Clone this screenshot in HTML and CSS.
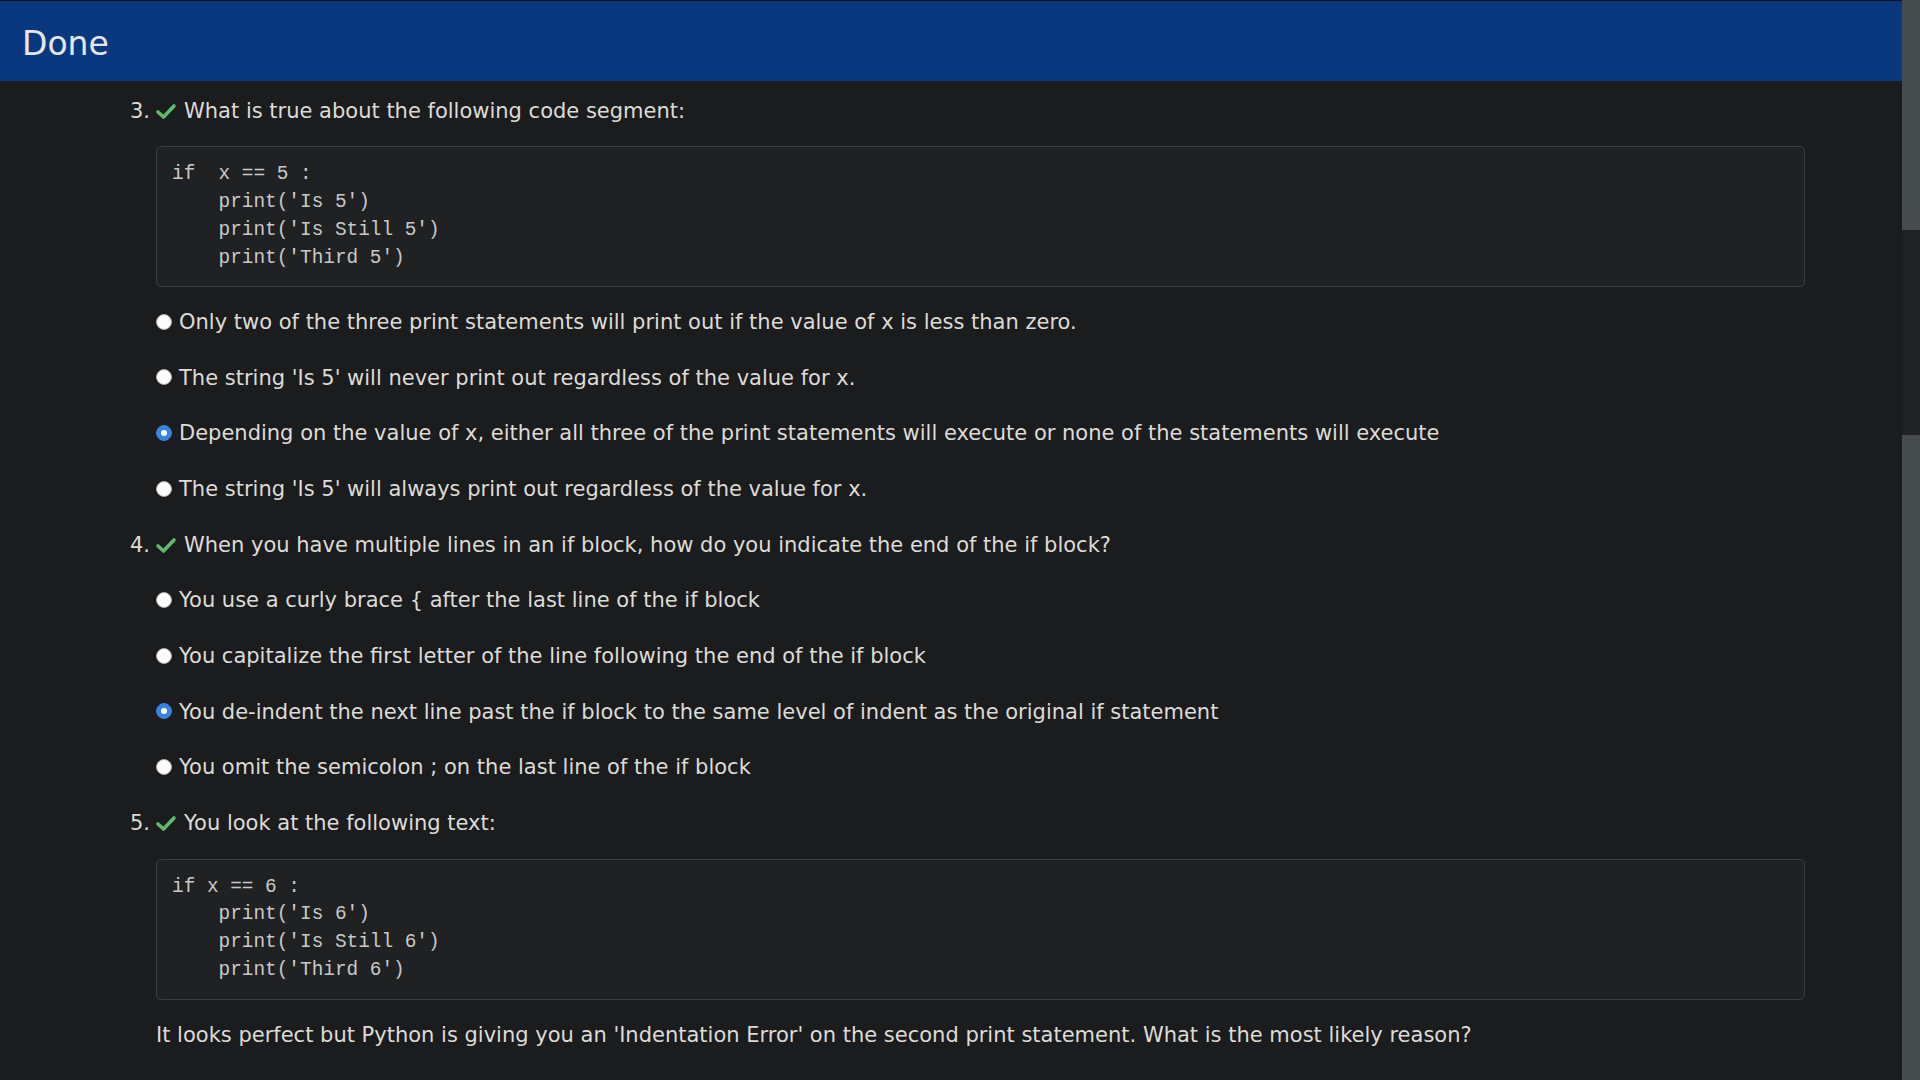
FILE: index.html
```html
<!DOCTYPE html>
<html lang="en">
<head>
<meta charset="utf-8">
<title>Done</title>
<link rel="stylesheet" href="styles.css">
</head>
<body>
<div class="page">
  <main class="main">
    <header class="header"><h1 class="title">Done</h1></header>
    <div class="content">
      <section class="question">
        <div class="q-title"><span class="num">3.</span><svg class="check" viewBox="0 0 22 17" width="22" height="17"><polyline points="3,9 8.5,14 19,3" /></svg><span>What is true about the following code segment:</span></div>
        <pre class="code">if  x == 5 :
    print('Is 5')
    print('Is Still 5')
    print('Third 5')</pre>
        <div class="option"><span class="radio"></span><span>Only two of the three print statements will print out if the value of x is less than zero.</span></div>
        <div class="option"><span class="radio"></span><span>The string 'Is 5' will never print out regardless of the value for x.</span></div>
        <div class="option"><span class="radio checked"></span><span>Depending on the value of x, either all three of the print statements will execute or none of the statements will execute</span></div>
        <div class="option"><span class="radio"></span><span>The string 'Is 5' will always print out regardless of the value for x.</span></div>
      </section>
      <section class="question">
        <div class="q-title"><span class="num">4.</span><svg class="check" viewBox="0 0 22 17" width="22" height="17"><polyline points="3,9 8.5,14 19,3" /></svg><span>When you have multiple lines in an if block, how do you indicate the end of the if block?</span></div>
        <div class="option"><span class="radio"></span><span>You use a curly brace { after the last line of the if block</span></div>
        <div class="option"><span class="radio"></span><span>You capitalize the first letter of the line following the end of the if block</span></div>
        <div class="option"><span class="radio checked"></span><span>You de-indent the next line past the if block to the same level of indent as the original if statement</span></div>
        <div class="option"><span class="radio"></span><span>You omit the semicolon ; on the last line of the if block</span></div>
      </section>
      <section class="question">
        <div class="q-title"><span class="num">5.</span><svg class="check" viewBox="0 0 22 17" width="22" height="17"><polyline points="3,9 8.5,14 19,3" /></svg><span>You look at the following text:</span></div>
        <pre class="code">if x == 6 :
    print('Is 6')
    print('Is Still 6')
    print('Third 6')</pre>
        <p class="para">It looks perfect but Python is giving you an 'Indentation Error' on the second print statement. What is the most likely reason?</p>
      </section>
    </div>
  </main>
  <div class="scrollbar">
    <div class="sb-top"></div>
    <div class="sb-mid"></div>
    <div class="sb-bot"></div>
  </div>
</div>
</body>
</html>
```

FILE: styles.css
```css
html, body {
  margin: 0;
  padding: 0;
  height: 1080px;
  overflow: hidden;
  background: #1b1c1e;
}
.page {
  display: flex;
  height: 1080px;
  font-family: "DejaVu Sans", sans-serif;
  color: #dedbd6;
}
.main {
  flex: 1;
  min-width: 0;
}
.header {
  height: 80px;
  border-top: 1px solid #111213;
  background: #0a3880;
  display: flex;
  align-items: center;
  padding-left: 22px;
}
.title {
  margin: 0;
  font-weight: normal;
  font-size: 33px;
  color: #e6e6e6;
  line-height: 1;
  padding-top: 4px;
}
.content {
  padding: 14.5px 97px 0 130px;
  display: flex;
  flex-direction: column;
  gap: 24.2px;
}
.question {
  display: flex;
  flex-direction: column;
  gap: 24.2px;
}
.q-title, .option, .para {
  font-size: 21px;
  line-height: 31.5px;
  margin: 0;
}
.q-title {
  display: flex;
  align-items: center;
}
.num {
  margin-right: 5px;
}
.check {
  margin-right: 7px;
  flex: none;
}
.check polyline {
  fill: none;
  stroke: #62b96e;
  stroke-width: 3.6;
  stroke-linecap: round;
  stroke-linejoin: round;
}
.code {
  margin: -5px 0 -4.75px 26px;
  padding: 14px 15px 14px 15px;
  background: #202123;
  border: 1px solid #3b3d40;
  border-radius: 5px;
  font-family: "Liberation Mono", monospace;
  font-size: 19.4px;
  line-height: 27.8px;
  color: #c9c9c9;
}
.option {
  display: flex;
  align-items: center;
  padding-left: 26px;
}
.radio {
  width: 16px;
  height: 16px;
  box-sizing: border-box;
  border-radius: 50%;
  background: #fbfbfb;
  border: 1px solid #a9a9a9;
  margin-right: 7px;
  flex: none;
  position: relative;
  top: -1px;
}
.radio.checked {
  background: #3a82e0;
  border-color: #3a82e0;
  display: flex;
  align-items: center;
  justify-content: center;
}
.radio.checked::after {
  content: "";
  width: 6px;
  height: 6px;
  border-radius: 50%;
  background: #ffffff;
}
.para {
  padding-left: 26px;
  margin-top: 0.5px;
}
.scrollbar {
  width: 18px;
  flex: none;
  display: flex;
  flex-direction: column;
}
.sb-top {
  height: 230px;
  background: #464b4d;
}
.sb-mid {
  height: 205px;
  background: #202324;
}
.sb-bot {
  flex: 1;
  background: #464b4d;
}
```
